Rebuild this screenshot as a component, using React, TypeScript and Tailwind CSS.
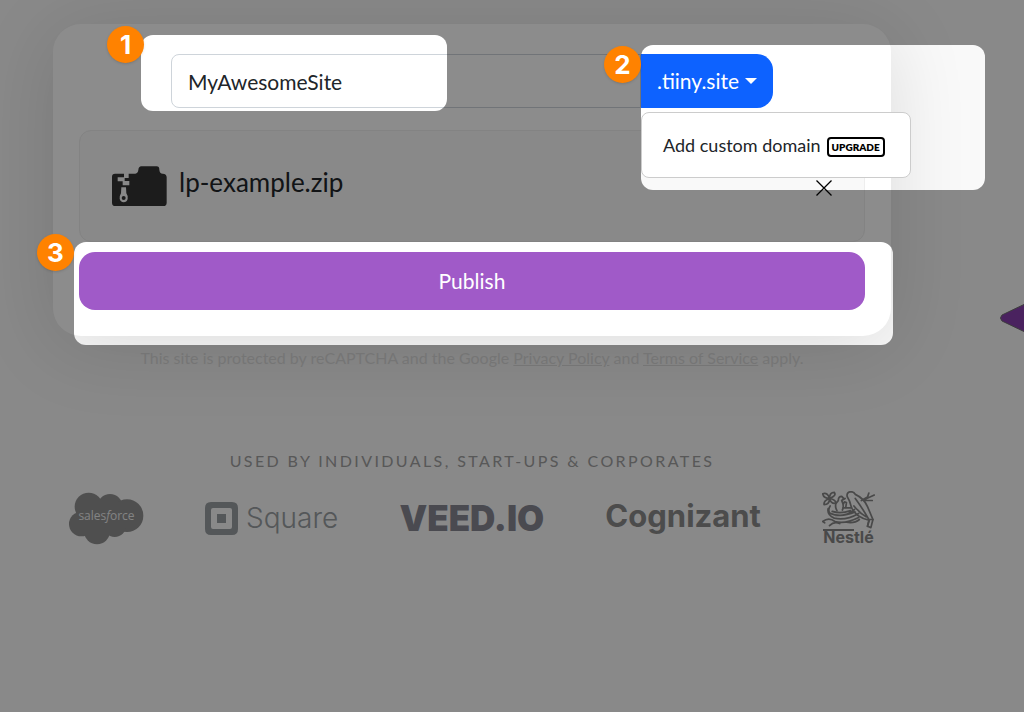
import { useState } from "react";

const highlights = [
  { x: 141, y: 35, width: 306, height: 76 },
  { x: 641, y: 45, width: 344, height: 145 },
  { x: 74, y: 242, width: 819, height: 103 },
];

const ZipIcon = () => (
  <svg viewBox="0 0 165 120" className="w-[55px] h-10 text-[#333333]" fill="currentColor">
    <path
      fillRule="evenodd"
      d="M9 23H36V34H17V46H32V58H52V45H38V36H50V23H70Q78 22 79 12Q80 1 88 1H134Q142 1 142 11Q143 23 152 23Q164 24 164 34V110Q164 120 154 120H10Q0 120 0 110V32Q0 23 9 23ZM28 64H42L43 82Q49 90 47 99Q44 109 35 109Q25 108 23 98Q22 90 27 82ZM35 90A6 6 0 1 0 35 102A6 6 0 1 0 35 90Z"
    />
  </svg>
);

const Salesforce = () => (
  <div className="grid place-items-center w-[75px] h-[54px]">
    <svg viewBox="0 0 225 160" className="[grid-area:1/1] w-full h-full" fill="#909090">
      <circle cx="59" cy="46" r="42" />
      <circle cx="123" cy="46" r="38" />
      <circle cx="174" cy="73" r="49" />
      <circle cx="37" cy="98" r="37" />
      <circle cx="84" cy="120" r="39" />
      <circle cx="137" cy="102" r="35" />
      <path d="M40 50H175V110H50Z" />
    </svg>
    <span className="[grid-area:1/1] z-0 pb-1 text-[12px] leading-4 font-medium text-[#eeeeee] font-['Open_Sans',sans-serif]">
      sales<i>f</i>orce
    </span>
  </div>
);

const Square = () => (
  <div className="flex items-center gap-2 text-[#999ea2]">
    <svg viewBox="0 0 33 33" className="w-[33px] h-[33px]">
      <path
        fill="currentColor"
        fillRule="evenodd"
        d="M6 0H27Q33 0 33 6V27Q33 33 27 33H6Q0 33 0 27V6Q0 0 6 0ZM8 6Q6 6 6 8V25Q6 27 8 27H25Q27 27 27 25V8Q27 6 25 6ZM12 12H21V21H12Z"
      />
    </svg>
    <span className="text-[28px] leading-8 font-light font-['Inter',sans-serif]">Square</span>
  </div>
);

const Nestle = () => (
  <div className="flex flex-col items-center w-[53px] text-[#868686]">
    <svg
      viewBox="0 0 156 112"
      className="w-[53px] h-[38px]"
      fill="none"
      stroke="currentColor"
      strokeWidth="5"
      strokeLinecap="round"
      strokeLinejoin="round"
    >
      <path d="M74 16Q72 4 84 2Q94 2 98 10Q124 22 134 46L150 84L144 108L134 104L138 86Q96 76 86 46Q82 28 74 16Z" />
      <path d="M98 22Q120 52 138 84M94 44Q112 66 130 76M134 104L140 84M150 84L140 84" />
      <path d="M44 58Q34 40 48 28Q48 16 58 16L64 22L58 28Q66 44 60 56M58 28L68 22M62 40L66 32L72 34L70 48" />
      <path d="M22 22Q4 22 2 8Q18 4 22 22Q22 4 36 4Q44 14 22 22ZM22 22Q4 28 6 40Q22 40 22 22Q26 38 40 36Q42 26 22 22" />
      <path d="M24 44Q16 58 24 66Q54 80 98 62M18 52Q14 70 36 80Q70 88 108 66M30 60Q54 68 84 58M40 72Q76 74 96 54M62 50H84" />
      <path d="M2 90Q20 76 38 90Q68 98 108 78M2 90L8 94M22 102Q36 88 52 96M110 84Q96 96 72 92" />
      <path d="M116 28L134 18L138 6M124 26L154 12M126 28L148 28" />
    </svg>
    <div className="relative h-4">
      <span className="block text-[16px] leading-4 font-bold font-['Inter',sans-serif]">Nestlé</span>
      <span className="absolute left-0 top-0 w-[31px] h-[2px] bg-current" />
    </div>
  </div>
);

const Step = ({ n, className }: { n: number; className: string }) => (
  <span
    className={`absolute flex items-center justify-center w-[37px] h-[37px] rounded-full bg-[#ff8200] text-white text-[26px] leading-none font-bold font-['Inter',sans-serif] shadow-sm ${className}`}
  >
    {n}
  </span>
);

const Spotlight = () => (
  <div className="absolute inset-0 pointer-events-none">
    <svg className="w-full h-full">
      <mask id="spotlight">
        <rect width="100%" height="100%" fill="white" />
        {highlights.map((h) => (
          <rect key={h.y} {...h} rx="12" fill="black" />
        ))}
      </mask>
      <rect width="100%" height="100%" fill="black" fillOpacity="0.45" mask="url(#spotlight)" />
    </svg>
    <Step n={1} className="left-[107px] top-[26px]" />
    <Step n={2} className="left-[604px] top-[46px]" />
    <Step n={3} className="left-[37px] top-[234px]" />
  </div>
);

const App = () => {
  const [site, setSite] = useState("MyAwesomeSite");

  return (
    <main className="relative min-h-screen overflow-hidden bg-[#f9f9f9] pt-6 pr-20 font-['Lato',sans-serif] text-[#212529]">
      <div className="w-full max-w-[838px] mx-auto">
        <form
          onSubmit={(e) => e.preventDefault()}
          className="flex flex-col bg-white rounded-[28px] px-[26px] pt-[30px] pb-[26px] shadow-[0_10px_80px_rgba(0,0,0,0.12)]"
        >
          <div className="flex w-full max-w-[602px] mx-auto text-[21px]">
            <input
              aria-label="Site name"
              value={site}
              onChange={(e) => setSite(e.target.value)}
              className="flex-1 min-w-0 h-[54px] px-4 bg-white border border-[#ced4da] rounded-l-lg outline-none"
            />
            <div className="relative w-[132px]">
              <button
                type="button"
                aria-haspopup="menu"
                className="flex items-center justify-center gap-[6px] w-full h-[54px] bg-[#0d62ff] text-white rounded-r-2xl"
              >
                .tiiny.site
                <svg viewBox="0 0 12 6" className="w-3 h-[6px]" fill="currentColor">
                  <path d="M0 0H12L6 6Z" />
                </svg>
              </button>
              <div className="absolute z-10 left-0 top-[58px] flex items-center w-[270px] h-[66px] pl-[21px] bg-white border border-[#cccccc] rounded-lg">
                <a href="#upgrade" className="flex items-center gap-[6px] text-[18px] whitespace-nowrap">
                  Add custom domain
                  <span className="mt-1 px-[3px] border-2 border-black rounded text-[10px] leading-4 font-extrabold text-black">
                    UPGRADE
                  </span>
                </a>
              </div>
            </div>
          </div>

          <div className="flex items-center mt-[22px] h-28 px-8 bg-[#f9f9f9] border border-[#eeeeee] rounded-xl">
            <ZipIcon />
            <span className="ml-3 pb-2 text-[26px] leading-8">lp-example.zip</span>
            <button type="button" aria-label="Remove file" className="ml-auto pt-1 text-black">
              <svg viewBox="0 0 16 16" className="w-4 h-4" stroke="currentColor" strokeWidth="1.3">
                <path d="M0.5 0.5L15.5 15.5M15.5 0.5L0.5 15.5" />
              </svg>
            </button>
          </div>

          <button type="submit" className="mt-[10px] h-[58px] bg-[#a05ac8] rounded-2xl text-[21px] text-white">
            Publish
          </button>
        </form>

        <p className="mt-[10px] text-center text-[16px] leading-6 text-[#d6d6d6]">
          This site is protected by reCAPTCHA and the Google{" "}
          <a href="#privacy" className="underline">
            Privacy Policy
          </a>{" "}
          and{" "}
          <a href="#terms" className="underline">
            Terms of Service
          </a>{" "}
          apply.
        </p>

        <h2 className="mt-[79px] text-center text-[16px] leading-6 tracking-[0.15em] text-[#a0a0a0]">
          USED BY INDIVIDUALS, START-UPS &amp; CORPORATES
        </h2>
        <div className="flex items-center justify-between mt-[18px] px-4">
          <Salesforce />
          <Square />
          <span className="text-[35px] leading-10 font-black text-[#878792] font-['Inter',sans-serif]">VEED.IO</span>
          <span className="pb-1 text-[31px] leading-10 font-bold text-[#8a8a8a] font-['Inter',sans-serif]">
            Cognizant
          </span>
          <Nestle />
        </div>
      </div>

      <svg viewBox="0 0 24 30" className="absolute right-0 top-[303px] w-6 h-[30px]">
        <path d="M25 1L2 12Q-1 15 2 18L25 29Z" fill="#883fae" stroke="#707070" />
      </svg>

      <Spotlight />
    </main>
  );
};

export default App;
